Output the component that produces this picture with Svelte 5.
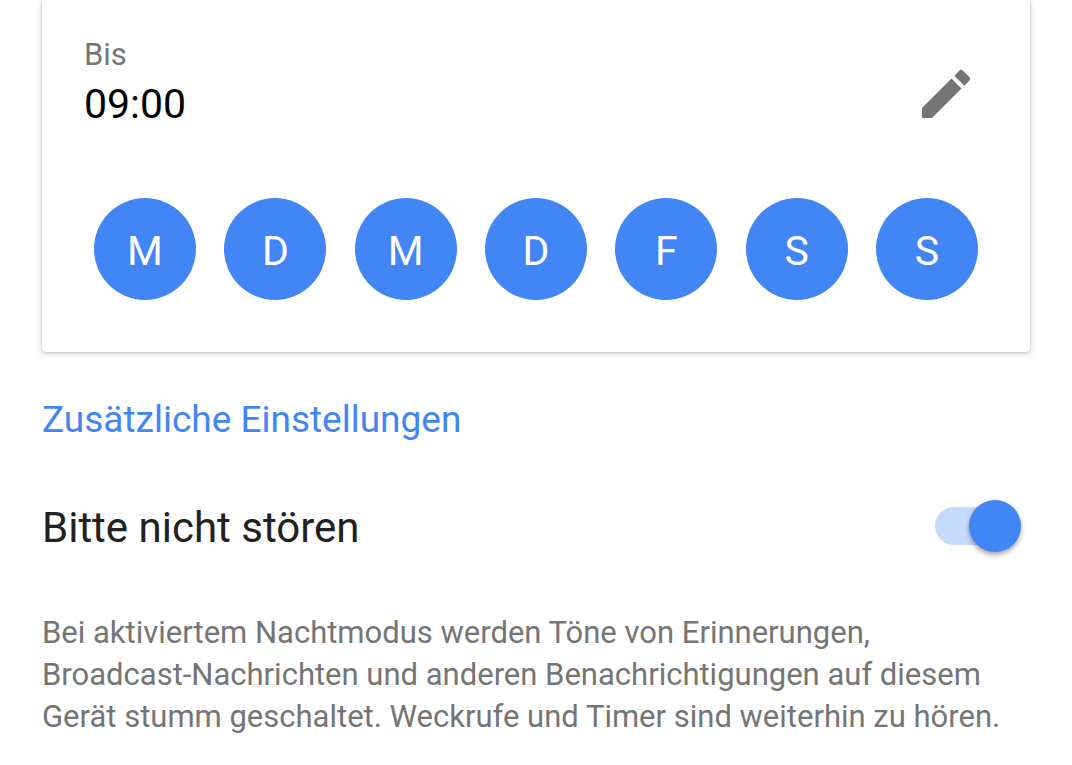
<script>
	// Days the schedule repeats on, Monday first
	let days = $state([
		{ letter: 'M', name: 'Montag', on: true },
		{ letter: 'D', name: 'Dienstag', on: true },
		{ letter: 'M', name: 'Mittwoch', on: true },
		{ letter: 'D', name: 'Donnerstag', on: true },
		{ letter: 'F', name: 'Freitag', on: true },
		{ letter: 'S', name: 'Samstag', on: true },
		{ letter: 'S', name: 'Sonntag', on: true },
	])
	let until = $state('09:00')
	let doNotDisturb = $state(true)
</script>

<main>
	<section class="card">
		<div class="time">
			<div>
				<div class="label">Bis</div>
				<div class="value">{until}</div>
			</div>
			<button class="edit" aria-label="Endzeit bearbeiten">
				<svg viewBox="0 0 24 24" aria-hidden="true">
					<path d="M3 17.25V21h3.75L17.81 9.94l-3.75-3.75L3 17.25zM20.71 7.04a.996.996 0 0 0 0-1.41l-2.34-2.34a.996.996 0 0 0-1.41 0l-1.83 1.83 3.75 3.75 1.83-1.83z" />
				</svg>
			</button>
		</div>
		<div class="days">
			{#each days as day}
				<button class="day" class:off={!day.on} aria-label={day.name} aria-pressed={day.on} onclick={() => (day.on = !day.on)}>{day.letter}</button>
			{/each}
		</div>
	</section>

	<h2>Zusätzliche Einstellungen</h2>

	<div class="setting">
		<label for="dnd">Bitte nicht stören</label>
		<input id="dnd" class="switch" type="checkbox" role="switch" bind:checked={doNotDisturb} />
	</div>

	<p>
		Bei aktiviertem Nachtmodus werden Töne von Erinnerungen, Broadcast-Nachrichten und anderen Benachrichtigungen auf diesem Gerät stumm geschaltet. Weckrufe und Timer sind weiterhin zu hören.
	</p>
</main>

<style>
	:global(body) {
		background: #fff;
		font-family: Roboto, sans-serif;
	}

	main {
		padding: 0 42px 32px;
	}

	.card {
		padding: 36px 52px 52px 42px;
		border-radius: 0 0 4px 4px;
		box-shadow: 0 0 2px rgba(0, 0, 0, 0.2), 0 2px 6px rgba(0, 0, 0, 0.2);
	}

	.time {
		display: flex;
		align-items: flex-end;
		justify-content: space-between;
	}

	.label {
		color: #757575;
		font-size: 31px;
		line-height: 38px;
	}

	.value {
		color: #000;
		font-size: 41px;
		line-height: 60px;
	}

	button {
		padding: 0;
		border: 0;
		font-family: inherit;
		cursor: pointer;
	}

	.edit {
		margin-bottom: 8px;
		background: none;
	}

	.edit svg {
		display: block;
		width: 64px;
		height: 64px;
		fill: #757575;
	}

	.days {
		display: flex;
		justify-content: space-between;
		margin-top: 64px;
		padding-left: 10px;
	}

	.day {
		width: 102px;
		height: 102px;
		padding-top: 4px;
		border-radius: 50%;
		background: #4285f4;
		color: #fff;
		font-size: 41px;
		line-height: 50px;
	}

	.day.off {
		background: #e0e0e0;
		color: #757575;
	}

	h2 {
		margin: 42px 0 0;
		color: #4285f4;
		font-size: 37px;
		font-weight: 400;
		line-height: 52px;
	}

	.setting {
		display: flex;
		align-items: center;
		justify-content: space-between;
		margin-top: 54px;
		padding-right: 9px;
		color: #212121;
		font-size: 42px;
		line-height: 56px;
	}

	.switch {
		appearance: none;
		display: grid;
		align-items: center;
		width: 86px;
		height: 52px;
		margin: 0 0 4px;
	}

	/* track and thumb share the one grid cell */
	.switch::before,
	.switch::after {
		content: '';
		grid-area: 1 / 1;
	}

	.switch::before {
		height: 38px;
		border-radius: 19px;
		background: #bdbdbd;
	}

	.switch::after {
		width: 52px;
		height: 52px;
		border-radius: 50%;
		background: #fafafa;
		box-shadow: 0 3px 5px rgba(0, 0, 0, 0.35);
	}

	.switch:checked::before {
		background: #c6dafc;
	}

	.switch:checked::after {
		justify-self: end;
		background: #4285f4;
	}

	p {
		margin: 56px 0 0;
		padding-right: 16px;
		color: #757575;
		font-size: 31px;
		line-height: 42px;
	}
</style>
